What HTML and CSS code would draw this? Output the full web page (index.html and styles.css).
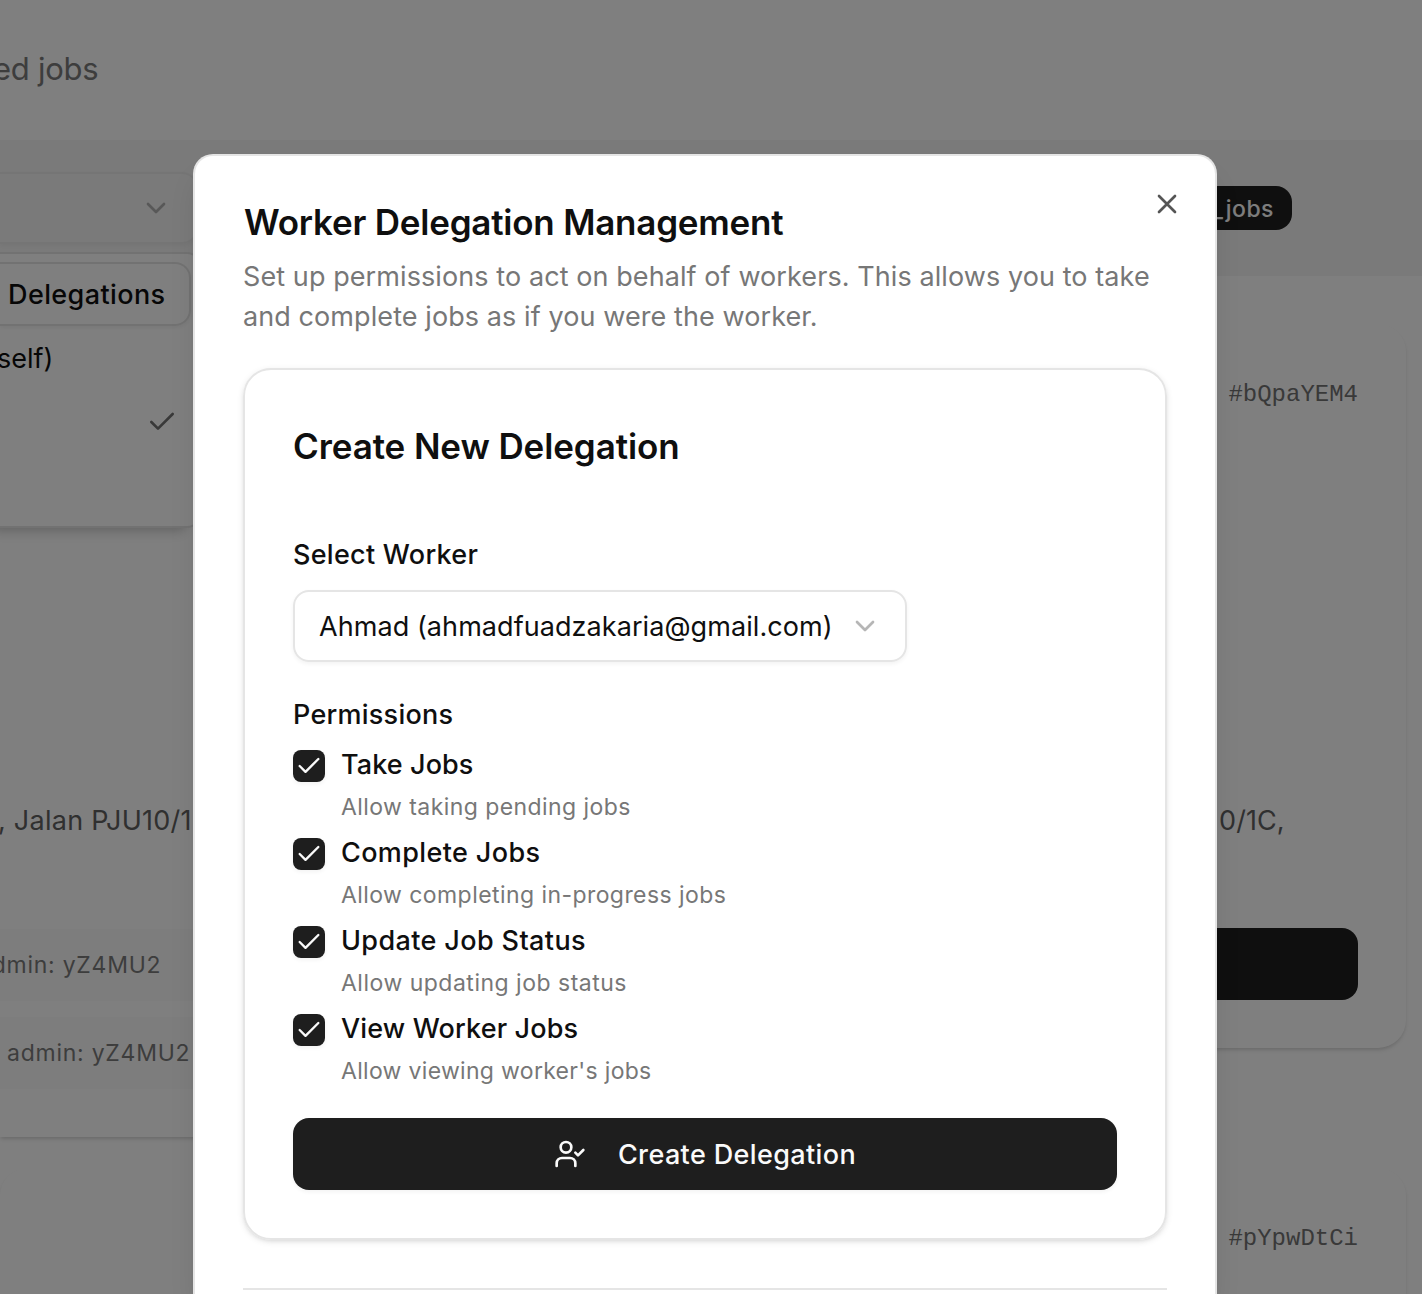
FILE: index.html
```html
<!DOCTYPE html>
<html lang="en">
<head>
<meta charset="utf-8">
<title>Worker Delegation Management</title>
<link rel="stylesheet" href="styles.css">
</head>
<body>
<div class="page">
  <header class="page-header"><p class="page-subtitle">ed jobs</p></header>

  <section class="toolbar">
    <div class="role-select">
      <svg class="icon chevron" viewBox="0 0 24 24"><path d="m6 9 6 6 6-6"/></svg>
      <div class="role-menu">
        <div class="menu-button">Delegations</div>
        <div class="menu-item">self)</div>
        <div class="menu-item menu-item-checked">
          <svg class="icon" viewBox="0 0 24 24"><path d="M20 6 9 17l-5-5"/></svg>
        </div>
        <div class="menu-item"></div>
      </div>
    </div>
    <span class="badge">_jobs</span>
  </section>

  <main class="job-grid">
    <article class="job-card job-card-left">
      <p class="address address-left">, Jalan PJU10/1</p>
      <div class="note note-first">admin: yZ4MU2</div>
      <div class="note note-second">admin: yZ4MU2</div>
    </article>
    <article class="job-card">
      <div class="job-id">#bQpaYEM4</div>
      <p class="address address-right">0/1C,</p>
      <div class="job-action"></div>
    </article>
    <article class="job-card job-card-left job-card-cut"></article>
    <article class="job-card job-card-cut">
      <div class="job-id">#pYpwDtCi</div>
    </article>
  </main>
</div>

<div class="overlay"></div>

<div class="dialog" role="dialog">
  <button class="close" aria-label="Close">
    <svg class="icon" viewBox="0 0 24 24"><path d="M18 6 6 18M6 6l12 12"/></svg>
  </button>
  <h2 class="dialog-title">Worker Delegation Management</h2>
  <p class="dialog-text">Set up permissions to act on behalf of workers. This allows you to take<br>and complete jobs as if you were the worker.</p>

  <section class="card">
    <h3 class="card-title">Create New Delegation</h3>
    <div class="label label-worker">Select Worker</div>
    <div class="select">
      <span>Ahmad (ahmadfuadzakaria@gmail.com)</span>
      <svg class="icon chevron" viewBox="0 0 24 24"><path d="m6 9 6 6 6-6"/></svg>
    </div>
    <div class="label label-permissions">Permissions</div>
    <div class="permissions">
      <div class="permission">
        <span class="checkbox"><svg class="icon" viewBox="0 0 24 24"><path d="M20 6 9 17l-5-5"/></svg></span>
        <div><div class="permission-name name-take">Take Jobs</div><div class="permission-hint">Allow taking pending jobs</div></div>
      </div>
      <div class="permission">
        <span class="checkbox"><svg class="icon" viewBox="0 0 24 24"><path d="M20 6 9 17l-5-5"/></svg></span>
        <div><div class="permission-name">Complete Jobs</div><div class="permission-hint">Allow completing in-progress jobs</div></div>
      </div>
      <div class="permission">
        <span class="checkbox"><svg class="icon" viewBox="0 0 24 24"><path d="M20 6 9 17l-5-5"/></svg></span>
        <div><div class="permission-name">Update Job Status</div><div class="permission-hint hint-update">Allow updating job status</div></div>
      </div>
      <div class="permission">
        <span class="checkbox"><svg class="icon" viewBox="0 0 24 24"><path d="M20 6 9 17l-5-5"/></svg></span>
        <div><div class="permission-name name-view">View Worker Jobs</div><div class="permission-hint hint-view">Allow viewing worker's jobs</div></div>
      </div>
    </div>
    <button class="submit">
      <svg class="icon" viewBox="0 0 24 24"><path d="M16 21v-2a4 4 0 0 0-4-4H6a4 4 0 0 0-4 4v2"/><circle cx="9" cy="7" r="4"/><path d="m16 11 2 2 4-4"/></svg>
      <span>Create Delegation</span>
    </button>
  </section>
  <hr class="divider">
</div>
</body>
</html>
```
FILE: styles.css
```css
* { box-sizing: border-box; margin: 0; padding: 0; }

body {
  position: relative;
  width: 1422px;
  height: 1294px;
  overflow: hidden;
  font-family: Inter, "Liberation Sans", sans-serif;
  font-size: 27px;
  color: #0f0f0f;
  background: #fff;
}

.icon {
  width: 32px;
  height: 32px;
  flex: none;
  display: block;
  fill: none;
  stroke: currentColor;
  stroke-width: 2;
  stroke-linecap: round;
  stroke-linejoin: round;
}

.chevron { opacity: .45; color: #5f5f5f; }

/* Page behind the dialog */
.page { height: 1294px; overflow: hidden; background: #fefefe; white-space: nowrap; }

.page-header { height: 140px; padding-bottom: 4px; display: flex; align-items: center; }
.page-subtitle { margin-left: -7px; font-size: 31px; letter-spacing: -.26px; color: #7a7a7a; }

.toolbar {
  height: 136px;
  padding: 32px 130px 32px 0;
  display: flex;
  align-items: center;
  justify-content: space-between;
  background: #f4f4f4;
}

.role-select {
  position: relative;
  width: 198px;
  height: 72px;
  padding-right: 24px;
  display: flex;
  align-items: center;
  justify-content: flex-end;
  border: 2px solid #ebebeb;
  border-left: 0;
  border-radius: 0 16px 16px 0;
  box-shadow: 0 2px 4px rgba(0, 0, 0, .04);
}

.role-menu {
  position: absolute;
  top: 78px;
  left: 0;
  width: 201px;
  height: 276px;
  padding: 8px 8px 8px 0;
  background: #fff;
  border: 2px solid #e5e5e5;
  border-left: 0;
  border-radius: 0 14px 14px 0;
  box-shadow: -10px 8px 12px -2px rgba(0, 0, 0, .12), -10px 4px 8px -4px rgba(0, 0, 0, .12);
}

.menu-button {
  height: 64px;
  padding-left: 8px;
  line-height: 62px;
  font-weight: 500;
  letter-spacing: .4px;
  border: 2px solid #e5e5e5;
  border-left: 0;
  border-radius: 0 16px 16px 0;
  box-shadow: 0 2px 4px rgba(0, 0, 0, .06);
}

.menu-item { height: 64px; line-height: 66px; margin-left: -3px; }
.menu-item-checked {
  display: flex;
  align-items: center;
  justify-content: flex-end;
  padding-right: 13px;
  color: #737373;
}

.badge {
  width: 90px;
  height: 44px;
  padding-right: 18px;
  line-height: 46px;
  text-align: right;
  font-size: 23px;
  font-weight: 500;
  letter-spacing: .5px;
  color: #fafafa;
  background: #1e1e1e;
  border-radius: 16px;
}

.job-grid {
  display: grid;
  grid-template-columns: 680px 694px;
  grid-template-rows: 813px 126px;
  column-gap: 32px;
  row-gap: 31px;
  align-items: start;
  padding-top: 48px;
}

.job-card {
  padding: 48px;
  background: #fff;
  border-radius: 28px;
  box-shadow: 0 3px 4px -1px rgba(0, 0, 0, .12), 0 2px 3px rgba(0, 0, 0, .04);
}
.job-card-left { padding-left: 0; border-radius: 0 28px 28px 0; }
.job-card-cut { height: 126px; padding-bottom: 0; border-radius: 28px 28px 0 0; }

.job-id {
  height: 44px;
  line-height: 46px;
  text-align: right;
  font-family: "Liberation Mono", monospace;
  font-size: 24px;
  color: #737373;
}

.address { height: 40px; line-height: 42px; color: #606060; }
.address-left { margin: 428px 0 89px -2px; letter-spacing: .25px; }
.address-right { margin: 384px 0 88px 459px; letter-spacing: .1px; }

.note {
  height: 72px;
  line-height: 72px;
  font-size: 23px;
  letter-spacing: .75px;
  color: #7a7a7a;
  background: #fbfbfb;
}
.note-first { margin-bottom: 16px; text-indent: -22px; }
.note-second { text-indent: 7px; }

.job-action { height: 72px; background: #1e1e1e; border-radius: 16px; }

.overlay { position: absolute; inset: 0; background: rgba(0, 0, 0, .5); }

/* Dialog */
.dialog {
  position: absolute;
  top: 154px;
  bottom: 0;
  left: 193px;
  width: 1024px;
  padding: 48px 48px 0;
  background: #fff;
  border: 2px solid #e5e5e5;
  border-bottom: 0;
  border-radius: 20px 20px 0 0;
  box-shadow: 0 20px 30px -6px rgba(0, 0, 0, .12), 0 8px 12px -8px rgba(0, 0, 0, .12);
}

.close {
  position: absolute;
  top: 32px;
  right: 32px;
  border: 0;
  background: none;
  color: #555;
}

.dialog-title {
  height: 36px;
  margin-bottom: 16px;
  padding-left: 1px;
  line-height: 36px;
  font-size: 35px;
  font-weight: 600;
  letter-spacing: -.22px;
}

.dialog-text {
  position: relative;
  top: 1px;
  margin-bottom: 32px;
  line-height: 40px;
  letter-spacing: .085px;
  color: #777;
  white-space: nowrap;
}

.card {
  height: 872px;
  padding: 48px;
  border: 2px solid #e5e5e5;
  border-radius: 28px;
  box-shadow: 0 2px 6px rgba(0, 0, 0, .1), 0 2px 4px -2px rgba(0, 0, 0, .1);
}

.card-title {
  height: 56px;
  margin-bottom: 60px;
  line-height: 56px;
  font-size: 35px;
  font-weight: 600;
  letter-spacing: -.1px;
}

.label { height: 40px; line-height: 42px; margin-bottom: 16px; font-weight: 500; }
.label-worker { letter-spacing: .27px; }
.label-permissions { letter-spacing: .25px; }

.select {
  width: 614px;
  height: 72px;
  margin-bottom: 32px;
  padding: 0 24px;
  display: flex;
  align-items: center;
  justify-content: space-between;
  letter-spacing: .07px;
  border: 2px solid #e5e5e5;
  border-radius: 16px;
  box-shadow: 0 2px 4px rgba(0, 0, 0, .05);
}

.permissions { display: flex; flex-direction: column; gap: 16px; margin-bottom: 32px; }
.permission { height: 72px; display: flex; gap: 16px; }

.checkbox {
  width: 32px;
  height: 32px;
  display: flex;
  align-items: center;
  justify-content: center;
  color: #fafafa;
  background: #1e1e1e;
  border-radius: 8px;
  box-shadow: 0 2px 4px rgba(0, 0, 0, .05);
}
.checkbox .icon { width: 28px; height: 28px; }

.permission-name { height: 28px; margin-bottom: 12px; line-height: 30px; font-weight: 500; letter-spacing: .38px; }
.name-take { letter-spacing: .1px; }
.name-view { letter-spacing: .15px; }
.permission-hint { height: 32px; line-height: 34px; font-size: 23px; letter-spacing: .43px; color: #777; }
.hint-update { letter-spacing: .5px; }
.hint-view { letter-spacing: .31px; }

.submit {
  width: 100%;
  height: 72px;
  display: flex;
  align-items: center;
  justify-content: center;
  gap: 32px;
  font: inherit;
  font-weight: 500;
  letter-spacing: .37px;
  color: #fafafa;
  background: #1e1e1e;
  border: 0;
  border-radius: 16px;
  box-shadow: 0 2px 4px rgba(0, 0, 0, .05);
}

.divider { height: 2px; margin-top: 48px; border: 0; background: #e5e5e5; }
```
